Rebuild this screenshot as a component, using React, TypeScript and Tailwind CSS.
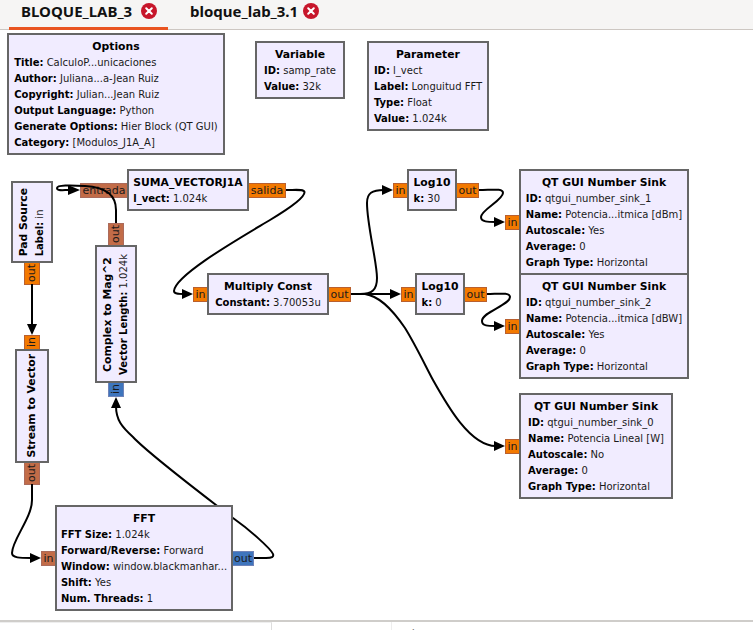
import React from "react";

type Row = [string, string];

function Block({ box, title, rows, vertical }: { box: string; title: string; rows: Row[]; vertical?: boolean }) {
  return (
    <div className={`absolute z-10 border-2 border-[#666666] bg-[#f1ecff] flex items-center justify-center ${box}`}>
      <div className={vertical ? "[writing-mode:vertical-rl] rotate-180" : "pt-[2px]"}>
        <div className="font-bold text-center text-black text-[10.8px]">{title}</div>
        {rows.map(([k, v]) => (
          <div key={k} className="text-[#1a1a1a]">
            <span className="font-bold text-black">{k}:</span> {v}
          </div>
        ))}
      </div>
    </div>
  );
}

function Port({ box, label, colors, vertical }: { box: string; label: string; colors: string; vertical?: boolean }) {
  return (
    <div className={`absolute z-[1] border flex items-center justify-center text-[#1a1a1a] text-[11px] ${colors} ${box}`}>
      <span className={vertical ? "[writing-mode:vertical-rl] rotate-180" : ""}>{label}</span>
    </div>
  );
}

const ORANGE = "bg-[#f37900] border-[#b9602f]";
const BROWN = "bg-[#c26c48] border-[#ab6b5c]";
const BLUE = "bg-[#3e75bd] border-[#6f83b8]";

function Close() {
  return (
    <svg width="16" height="16" viewBox="0 0 16 16" className="shrink-0">
      <circle cx="8" cy="8" r="8" fill="#c7162b" />
      <path d="M5.2 5.2 L10.8 10.8 M10.8 5.2 L5.2 10.8" stroke="#ffffff" strokeWidth="2" strokeLinecap="round" />
    </svg>
  );
}

const WIRES = [
  "M286 190 C296 190 304 189 304.5 192 C305 197 290 208 270 220 C240 238 175 275 174 291 C174 294 178 294 184 294",
  "M116 223 V210 C116 195 105 187 85 186 C70 185 57 185 57 188 C57 191 62 190 70 190",
  "M32 284 V326",
  "M32 484 V500 C32 518 12 540 12 553 C12 558 20 558 31 558",
  "M254 558 H266 C272 558 274 557 273 554 C271 549 250 530 233 518 L216 505 C190 485 145 450 133 437 C122 427 116 420 116 406",
  "M351 294 H392",
  "M360 294 C372 294 377 290 377 278 C377 262 367 225 367 203 C367 193 372 190 384 190",
  "M365 294 C378 296 390 306 405 328 C415 344 425 365 433 380 C447 405 470 446 496 446",
  "M479 190 C492 190 503 188 503 193 C503 200 481 210 481 217 C481 222 488 222 496 222",
  "M487 294 C498 294 510 292 510 297 C510 305 482 312 482 321 C482 326 488 326 496 326",
];

const ARROWS = [
  "193,294 182,289 182,299",
  "80,190 68,185 68,195",
  "32,335 27,324 37,324",
  "41,558 30,553 30,563",
  "116,397 111,408 121,408",
  "401,294 390,289 390,299",
  "393,190 382,185 382,195",
  "505,446 494,441 494,451",
  "505,222 494,217 494,227",
  "505,326 494,321 494,331",
];

export default function App() {
  return (
    <div className="w-[753px] h-[630px] flex flex-col overflow-hidden bg-white font-['DejaVu_Sans',sans-serif] text-[10px] leading-[16px]">
      <div className="h-[30px] shrink-0 flex items-start bg-[#f6f5f4] border-b border-[#cdc7c2] pl-[9px] font-['Noto_Sans',sans-serif] text-[15px] font-bold text-[#111111]">
        <div className="w-[159px] h-[30px] border-b-[3px] border-[#e95420] pl-[12px] pt-[1px] flex items-start gap-[9px] leading-[20px]">
          <span>BLOQUE_LAB_3</span>
          <span className="pt-[2px]"><Close /></span>
        </div>
        <div className="pl-[22px] pt-[1px] flex items-start gap-[5px] leading-[20px]">
          <span>bloque_lab_3.1</span>
          <span className="pt-[2px]"><Close /></span>
        </div>
      </div>

      <div className="relative flex-1 whitespace-nowrap">
        <svg className="absolute left-0 top-0 z-[5]" width="753" height="590" viewBox="0 30 753 590" fill="none">
          {WIRES.map((d) => (
            <path key={d} d={d} stroke="#000000" strokeWidth="2" />
          ))}
          {ARROWS.map((p) => (
            <polygon key={p} points={p} fill="#000000" />
          ))}
        </svg>

        <Block box="left-[7px] top-[3px] w-[218px] h-[122px]" title="Options" rows={[
          ["Title", "CalculoP...unicaciones"],
          ["Author", "Juliana...a-Jean Ruiz"],
          ["Copyright", "Julian...Jean Ruiz"],
          ["Output Language", "Python"],
          ["Generate Options", "Hier Block (QT GUI)"],
          ["Category", "[Modulos_J1A_A]"],
        ]} />
        <Block box="left-[255px] top-[11px] w-[90px] h-[58px]" title="Variable" rows={[["ID", "samp_rate"], ["Value", "32k"]]} />
        <Block box="left-[367px] top-[11px] w-[122px] h-[90px]" title="Parameter" rows={[["ID", "l_vect"], ["Label", "Longuitud FFT"], ["Type", "Float"], ["Value", "1.024k"]]} />

        <Port box="left-[80px] top-[153px] w-[48px] h-[15px]" colors={BROWN} label="entrada" />
        <Block box="left-[127px] top-[139px] w-[122px] h-[42px]" title="SUMA_VECTORJ1A" rows={[["l_vect", "1.024k"]]} />
        <Port box="left-[248px] top-[153px] w-[38px] h-[15px]" colors={ORANGE} label="salida" />

        <Block box="left-[11px] top-[151px] w-[42px] h-[82px]" vertical title="Pad Source" rows={[["Label", "in"]]} />
        <Port box="left-[24px] top-[232px] w-[16px] h-[23px]" colors={ORANGE} label="out" vertical />

        <Port box="left-[108px] top-[193px] w-[16px] h-[23px]" colors={BROWN} label="out" vertical />
        <Block box="left-[95px] top-[215px] w-[42px] h-[138px]" vertical title="Complex to Mag^2" rows={[["Vector Length", "1.024k"]]} />
        <Port box="left-[108px] top-[352px] w-[16px] h-[15px]" colors={BLUE} label="in" vertical />

        <Port box="left-[24px] top-[305px] w-[16px] h-[15px]" colors={ORANGE} label="in" vertical />
        <Block box="left-[15px] top-[319px] w-[34px] h-[114px]" vertical title="Stream to Vector" rows={[]} />
        <Port box="left-[24px] top-[432px] w-[16px] h-[23px]" colors={BROWN} label="out" vertical />

        <Port box="left-[41px] top-[521px] w-[15px] h-[15px]" colors={BROWN} label="in" />
        <Block box="left-[55px] top-[475px] w-[178px] h-[106px]" title="FFT" rows={[
          ["FFT Size", "1.024k"],
          ["Forward/Reverse", "Forward"],
          ["Window", "window.blackmanhar..."],
          ["Shift", "Yes"],
          ["Num. Threads", "1"],
        ]} />
        <Port box="left-[232px] top-[521px] w-[22px] h-[15px]" colors={BLUE} label="out" />

        <Port box="left-[193px] top-[257px] w-[15px] h-[15px]" colors={ORANGE} label="in" />
        <Block box="left-[207px] top-[243px] w-[122px] h-[42px]" title="Multiply Const" rows={[["Constant", "3.70053u"]]} />
        <Port box="left-[328px] top-[257px] w-[23px] h-[15px]" colors={ORANGE} label="out" />

        <Port box="left-[393px] top-[153px] w-[15px] h-[15px]" colors={ORANGE} label="in" />
        <Block box="left-[407px] top-[139px] w-[50px] h-[42px]" title="Log10" rows={[["k", "30"]]} />
        <Port box="left-[456px] top-[153px] w-[23px] h-[15px]" colors={ORANGE} label="out" />

        <Port box="left-[401px] top-[257px] w-[15px] h-[15px]" colors={ORANGE} label="in" />
        <Block box="left-[415px] top-[243px] w-[50px] h-[42px]" title="Log10" rows={[["k", "0"]]} />
        <Port box="left-[464px] top-[257px] w-[23px] h-[15px]" colors={ORANGE} label="out" />

        <Port box="left-[505px] top-[185px] w-[15px] h-[15px]" colors={ORANGE} label="in" />
        <Block box="left-[519px] top-[139px] w-[170px] h-[106px]" title="QT GUI Number Sink" rows={[
          ["ID", "qtgui_number_sink_1"],
          ["Name", "Potencia...itmica [dBm]"],
          ["Autoscale", "Yes"],
          ["Average", "0"],
          ["Graph Type", "Horizontal"],
        ]} />
        <Port box="left-[505px] top-[289px] w-[15px] h-[15px]" colors={ORANGE} label="in" />
        <Block box="left-[519px] top-[243px] w-[170px] h-[106px]" title="QT GUI Number Sink" rows={[
          ["ID", "qtgui_number_sink_2"],
          ["Name", "Potencia...itmica [dBW]"],
          ["Autoscale", "Yes"],
          ["Average", "0"],
          ["Graph Type", "Horizontal"],
        ]} />
        <Port box="left-[505px] top-[409px] w-[15px] h-[15px]" colors={ORANGE} label="in" />
        <Block box="left-[519px] top-[363px] w-[154px] h-[106px]" title="QT GUI Number Sink" rows={[
          ["ID", "qtgui_number_sink_0"],
          ["Name", "Potencia Lineal [W]"],
          ["Autoscale", "No"],
          ["Average", "0"],
          ["Graph Type", "Horizontal"],
        ]} />
      </div>

      <div className="h-[10px] shrink-0 flex border-t-2 border-[#cfcdca] bg-white text-[#777777] font-['Noto_Sans',sans-serif] text-[12px] leading-[16px] overflow-hidden">
        <div className="w-[272px] border-r border-[#dddddd] border-t border-t-[#eeeeee]" />
        <div className="w-[120px] border-r border-[#eeeeee] pl-[7px] pt-[5px]">ID</div>
        <div className="pl-[6px] pt-[5px]">Value</div>
      </div>
    </div>
  );
}
